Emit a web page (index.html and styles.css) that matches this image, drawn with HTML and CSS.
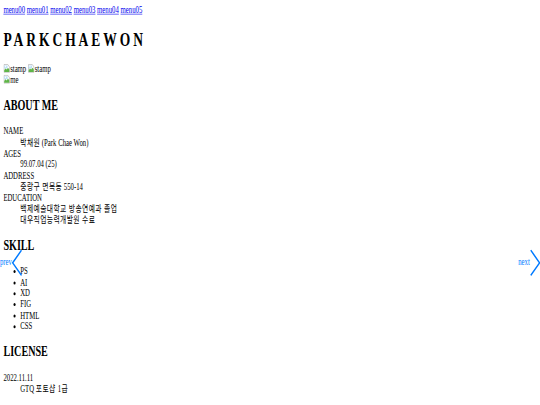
FILE: index.html
```html
<!DOCTYPE html>
<html lang="ko">
<head>
<meta charset="utf-8">
<title>PARKCHAEWON</title>
<link rel="stylesheet" href="styles.css">
</head>
<body>
<div class="page">
  <nav class="menu">
    <a href="#">menu00</a> <a href="#">menu01</a> <a href="#">menu02</a> <a href="#">menu03</a> <a href="#">menu04</a> <a href="#">menu05</a>
  </nav>
  <h1 class="logo">PARKCHAEWON</h1>
  <div class="pics">
    <span class="broken"><svg class="bicon" viewBox="0 0 16 16"><path d="M1.5 1.5h9l4 4v9h-13z" fill="#fff" stroke="#9a9a9a"/><path d="M2 3h8v5H2z" fill="#bfe0f7"/><path d="M2 11l3-3 3 2 3-3 3 3v4H2z" fill="#5fb548"/><circle cx="5" cy="5" r="1.3" fill="#fff"/></svg>stamp</span>
    <span class="broken"><svg class="bicon" viewBox="0 0 16 16"><path d="M1.5 1.5h9l4 4v9h-13z" fill="#fff" stroke="#9a9a9a"/><path d="M2 3h8v5H2z" fill="#bfe0f7"/><path d="M2 11l3-3 3 2 3-3 3 3v4H2z" fill="#5fb548"/><circle cx="5" cy="5" r="1.3" fill="#fff"/></svg>stamp</span>
    <br>
    <span class="broken"><svg class="bicon" viewBox="0 0 16 16"><path d="M1.5 1.5h9l4 4v9h-13z" fill="#fff" stroke="#9a9a9a"/><path d="M2 3h8v5H2z" fill="#bfe0f7"/><path d="M2 11l3-3 3 2 3-3 3 3v4H2z" fill="#5fb548"/><circle cx="5" cy="5" r="1.3" fill="#fff"/></svg>me</span>
  </div>
  <section class="about">
    <h2>ABOUT ME</h2>
    <dl>
      <dt>NAME</dt>
      <dd><span class="ko">박채원</span> (Park Chae Won)</dd>
      <dt>AGES</dt>
      <dd>99.07.04 (25)</dd>
      <dt>ADDRESS</dt>
      <dd><span class="ko">중랑구 면목동</span> 550-14</dd>
      <dt>EDUCATION</dt>
      <dd><span class="ko">백제예술대학교 방송연예과 졸업</span></dd>
      <dd><span class="ko">대우직업능력개발원 수료</span></dd>
    </dl>
  </section>
  <section class="skill">
    <h2>SKILL</h2>
    <ul>
      <li>PS</li>
      <li>AI</li>
      <li>XD</li>
      <li>FIG</li>
      <li>HTML</li>
      <li>CSS</li>
    </ul>
    <div class="nav-btn prev">prev<svg class="chev" viewBox="0 0 25 44"><polyline points="23,1 2,22 23,43" fill="none" stroke="#007aff" stroke-width="3"/></svg></div>
    <div class="nav-btn next">next<svg class="chev" viewBox="0 0 25 44"><polyline points="2,1 23,22 2,43" fill="none" stroke="#007aff" stroke-width="3"/></svg></div>
  </section>
  <section class="license">
    <h2>LICENSE</h2>
    <dl>
      <dt>2022.11.11</dt>
      <dd>GTQ <span class="ko">포토샵 1급</span></dd>
    </dl>
  </section>
</div>
</body>
</html>
```

FILE: styles.css
```css
html, body {
  margin: 0;
  padding: 0;
  overflow: hidden;
  background: #fff;
}

.page {
  width: 1280px;
  height: 675px;
  overflow: hidden;
  box-sizing: border-box;
  padding: 8px;
  transform: scale(0.421875, 0.6);
  transform-origin: 0 0;
  font-family: "Liberation Serif", "Noto Sans CJK KR", serif;
  font-size: 16px;
  line-height: 1.15;
  color: #000;
}

.menu a {
  color: #0000ee;
  text-decoration: underline;
}

.logo {
  font-size: 32px;
  font-weight: bold;
  margin: 21.44px 0;
  letter-spacing: 7px;
}

.bicon {
  width: 16px;
  height: 16px;
  vertical-align: -2px;
}

h2 {
  font-size: 24px;
  font-weight: bold;
  margin: 19.92px 0;
}

dl {
  margin: 16px 0;
}

dd {
  margin-left: 40px;
}

.ko {
  letter-spacing: 1px;
}

ul {
  margin: 16px 0;
  padding-left: 40px;
}

.skill {
  position: relative;
}

.nav-btn {
  position: absolute;
  top: 20px;
  width: 27px;
  height: 44px;
  display: flex;
  align-items: center;
  justify-content: center;
  color: #007aff;
  white-space: nowrap;
}

.nav-btn.prev {
  left: 5px;
}

.nav-btn.next {
  right: 4px;
}

.chev {
  width: 25px;
  height: 44px;
  flex: none;
}
```
